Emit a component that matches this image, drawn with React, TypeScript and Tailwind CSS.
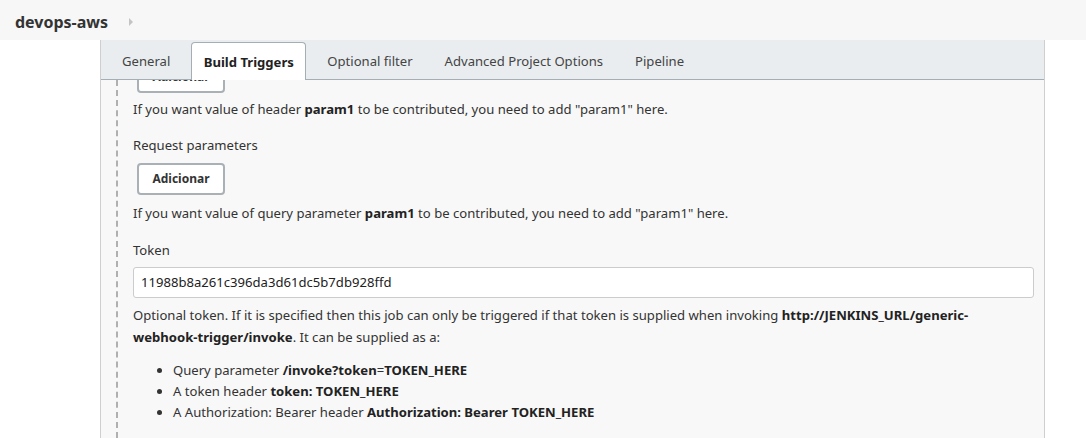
import React from "react";

const tabs = ["General", "Build Triggers", "Optional filter", "Advanced Project Options", "Pipeline"];

function AddButton() {
  return (
    <button className="h-[32px] w-[88px] rounded-[4px] border-2 border-[#a9b1b7] bg-white text-[12px] font-bold text-[#333]">
      Adicionar
    </button>
  );
}

export default function App() {
  return (
    <div
      className="h-[438px] w-[1086px] overflow-hidden bg-white text-[13.1px] text-[#333]"
      style={{ fontFamily: '"Noto Sans", "Open Sans", Arial, sans-serif' }}
    >
      {/* Breadcrumb bar */}
      <div className="flex h-[40px] items-center bg-[#f7f7f7] pl-[15px] pt-[4px]">
        <span className="text-[16px] font-bold text-[#333]">devops-aws</span>
        <span className="ml-[21px] h-0 w-0 border-y-[4px] border-l-[4px] border-y-transparent border-l-[#c4c4c4]" />
      </div>

      <div className="ml-[100px] h-[398px] w-[945px] border-x border-[#cfcfcf] bg-[#f8f8f8]">
        {/* Tabs */}
        <div className="relative z-10 flex h-[40px] items-end gap-[10px] border-b border-[#a5aeb4] bg-[#e9edf0] pl-[10px]">
          {tabs.map((t) => {
            const active = t === "Build Triggers";
            return (
              <div
                key={t}
                className={
                  active
                    ? "-mb-px flex h-[38px] w-[115px] items-center justify-center rounded-t-[4px] border border-b-0 border-[#a5aeb4] bg-white pt-[3px] font-bold text-[#222]"
                    : "flex h-[38px] items-center px-[11px] pt-[3px] text-[#444]"
                }
              >
                {t}
              </div>
            );
          })}
        </div>

        {/* Content */}
        <div className="relative h-[358px] overflow-hidden">
          <div className="absolute left-[15px] top-0 h-full border-l-2 border-dashed border-[#b0b0b0]" />
          <div className="-mt-[19px] pl-[32px] pr-[10px]">
            <div className="pl-[4px]">
              <AddButton />
            </div>
            <p className="mt-[6px] leading-[20px]">
              If you want value of header <b className="text-[#222]">param1</b> to be contributed, you need to add "param1" here.
            </p>
            <p className="mt-[16px] leading-[20px]">Request parameters</p>
            <div className="mt-[8px] pl-[4px]">
              <AddButton />
            </div>
            <p className="mt-[8px] leading-[20px]">
              If you want value of query parameter <b className="text-[#222]">param1</b> to be contributed, you need to add "param1" here.
            </p>
            <p className="mt-[17px] leading-[20px]">Token</p>
            <div className="mt-[7px] flex h-[31px] w-[901px] items-center rounded-[3px] border border-[#cccccc] bg-white pl-[7px] text-[#222]">
              11988b8a261c396da3d61dc5b7db928ffd
            </div>
            <p className="mt-[6px] leading-[22px]">
              Optional token. If it is specified then this job can only be triggered if that token is supplied when invoking{" "}
              <b className="text-[#222]">
                http://JENKINS_URL/generic-
                <br />
                webhook-trigger/invoke
              </b>
              . It can be supplied as a:
            </p>
            <ul className="mt-[12px] list-disc pl-[40px] leading-[21px]">
              <li>
                Query parameter <b className="text-[#222]">/invoke?token</b>=<b className="text-[#222]">TOKEN_HERE</b>
              </li>
              <li>
                A token header <b className="text-[#222]">token: TOKEN_HERE</b>
              </li>
              <li>
                A Authorization: Bearer header <b className="text-[#222]">Authorization: Bearer TOKEN_HERE</b>
              </li>
            </ul>
          </div>
        </div>
      </div>
    </div>
  );
}
